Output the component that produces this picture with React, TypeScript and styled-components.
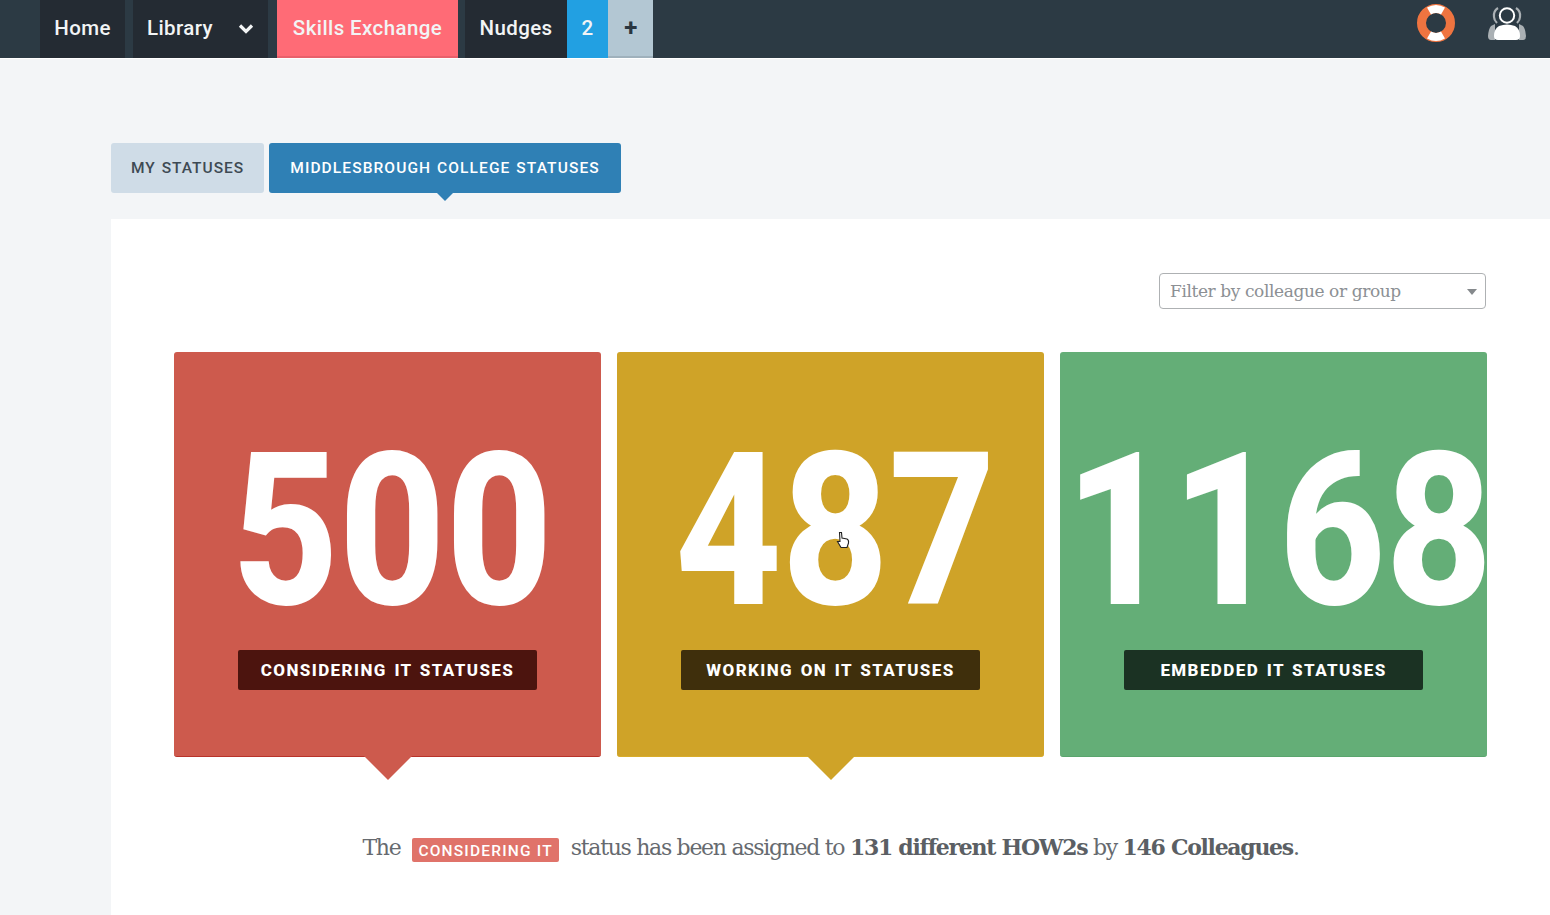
import React from 'react';
import styled, { createGlobalStyle } from 'styled-components';

const din = '"Roboto", "Liberation Sans", sans-serif';
const slab = '"DejaVu Serif", "Liberation Serif", serif';

const GlobalStyle = createGlobalStyle`
  html, body {
    margin: 0;
    height: 100%;
    overflow: hidden;
    background: #f3f5f7;
  }
  * { box-sizing: border-box; }
`;

const Page = styled.div`
  width: 1550px;
  height: 915px;
  overflow: hidden;
`;

const TopBar = styled.header`
  height: 59px;
  background: #2c3a44;
  display: flex;
  justify-content: space-between;
  padding: 0 23px 0 40px;
  border-bottom: 1px solid #fff;
`;

const Nav = styled.nav`
  display: flex;
`;

const NavItem = styled.a<{ $w: number; $gap?: number; $bg?: string; $color?: string; $shade?: string; $heavy?: boolean }>`
  width: ${p => p.$w}px;
  margin-right: ${p => p.$gap ?? 0}px;
  background: ${p => p.$bg ?? '#242b33'};
  color: ${p => p.$color ?? '#f2f4f5'};
  border-bottom: 2px solid ${p => p.$shade ?? 'transparent'};
  display: flex;
  align-items: center;
  justify-content: center;
  gap: 25px;
  font: ${p => (p.$heavy ? '700 24px' : '500 20.5px')} ${din};
  letter-spacing: 0.4px;
  padding-left: ${p => (p.$heavy ? 1 : 0)}px;
`;

const Icons = styled.div`
  display: flex;
  align-items: flex-start;
  gap: 31px;
  padding-top: 3px;
`;

const Content = styled.main`
  padding: 84px 0 0 111px;
`;

const Tabs = styled.div`
  display: flex;
  gap: 5px;
`;

const Tab = styled.button<{ $active?: boolean }>`
  position: relative;
  height: 50px;
  border: 0;
  border-radius: 3px;
  padding: 0 ${p => (p.$active ? 21 : 20)}px;
  background: ${p => (p.$active ? '#2f80b5' : '#cfdce7')};
  color: ${p => (p.$active ? '#fff' : '#3e4a54')};
  font: 500 15.5px ${din};
  letter-spacing: ${p => (p.$active ? 1.1 : 1)}px;
  word-spacing: 1px;
  white-space: nowrap;
  ${p =>
    p.$active &&
    `&::after {
      content: '';
      position: absolute;
      left: 50%;
      top: 100%;
      margin-left: -8px;
      border: 8px solid transparent;
      border-top-color: #2f80b5;
      border-bottom: 0;
    }`}
`;

const Panel = styled.section`
  margin-top: 26px;
  background: #fff;
  height: 700px;
  padding: 54px 63px 0 63px;
`;

const FilterRow = styled.div`
  display: flex;
  justify-content: flex-end;
  padding-right: 1px;
`;

const Filter = styled.div`
  position: relative;
  width: 327px;
  height: 36px;
  border: 1.5px solid #aeb1b3;
  border-radius: 4px;
  padding: 0 10px;
  display: flex;
  align-items: center;
  font: 400 17px ${slab};
  letter-spacing: -0.4px;
  color: #8c9094;
  &::after {
    content: '';
    position: absolute;
    right: 8px;
    top: 15px;
    border: 5px solid transparent;
    border-top: 6px solid #85898c;
    border-bottom: 0;
  }
`;

const Cards = styled.div`
  margin-top: 43px;
  display: grid;
  grid-template-columns: repeat(3, 427px);
  gap: 16px;
`;

const Card = styled.div<{ $bg: string; $edge: string; $tail?: boolean }>`
  position: relative;
  height: 405px;
  background: ${p => p.$bg};
  border-bottom: 1px solid ${p => p.$edge};
  border-radius: 3px;
  display: flex;
  flex-direction: column;
  align-items: center;
  ${p =>
    p.$tail &&
    `&::after {
      content: '';
      position: absolute;
      left: 50%;
      top: 100%;
      margin-left: -24px;
      border: 24px solid transparent;
      border-top-color: ${p.$bg};
      border-bottom: 0;
    }`}
`;

const Count = styled.div`
  margin-top: 60px;
  height: 238px;
  font: 800 213px/238px ${din};
  color: #fff;
  transform: translateX(5px) scaleX(0.87);
  white-space: nowrap;
`;

const CountTag = styled.div<{ $bg: string }>`
  width: 299px;
  height: 40px;
  background: ${p => p.$bg};
  border-radius: 2px;
  color: #fff;
  display: flex;
  align-items: center;
  justify-content: center;
  font: 800 17px ${din};
  letter-spacing: 1.4px;
  word-spacing: 2px;
`;

const Summary = styled.p`
  margin: 77px 0 0;
  text-align: center;
  font: 400 22px ${slab};
  color: #666a6f;
  letter-spacing: -1.3px;
  white-space: nowrap;
  b {
    font-weight: 700;
    color: #5b5f64;
  }
`;

const Badge = styled.span`
  display: inline-block;
  margin: 0 12px;
  padding: 0 6px;
  height: 24px;
  background: #e0736a;
  border-radius: 2px;
  color: #fff;
  font: 500 15.5px/26px ${din};
  letter-spacing: 1.2px;
  vertical-align: -1px;
`;

const Cursor = styled.svg`
  position: absolute;
  left: 836px;
  top: 531px;
`;

const LifeRing = () => (
  <svg width="40" height="40" viewBox="0 0 40 40">
    <circle cx="20" cy="20" r="14.5" fill="none" stroke="#ef7440" strokeWidth="9" />
    <path d="M11 4.5 A18 18 0 0 1 29 4.5 L25 11.5 A10 10 0 0 0 15 11.5Z" fill="#fff" />
    <path d="M11 35.5 A18 18 0 0 0 29 35.5 L25 28.5 A10 10 0 0 1 15 28.5Z" fill="#fff" />
  </svg>
);

const People = () => (
  <svg width="40" height="40" viewBox="0 0 40 40">
    <path d="M11 5 A9 9 0 0 0 7 14 Q7 17 10 20 M29 5 A9 9 0 0 1 33 14 Q33 17 30 20" fill="none" stroke="#aab0b4" strokeWidth="2.2" />
    <path d="M4 23 Q1.5 26 1 33 Q1 37 4 37 L8 37 L8 21Z M36 23 Q38.5 26 39 33 Q39 37 36 37 L32 37 L32 21Z" fill="#aab0b4" />
    <circle cx="20" cy="12.5" r="7.2" fill="none" stroke="#fff" strokeWidth="2" />
    <path d="M12 23 Q20 20 28 23 Q33 26 33 33 Q33 37 29 37 L11 37 Q7 37 7 33 Q7 26 12 23Z" fill="#fff" />
  </svg>
);

const Chevron = () => (
  <svg width="16" height="11" viewBox="0 0 16 11">
    <path d="M2 2.5 L8 8.5 L14 2.5" fill="none" stroke="#f2f4f5" strokeWidth="3.2" />
  </svg>
);

export default function App() {
  return (
    <Page>
      <GlobalStyle />
      <TopBar>
        <Nav>
          <NavItem $w={85} $gap={8}>Home</NavItem>
          <NavItem $w={135} $gap={9}>Library <Chevron /></NavItem>
          <NavItem $w={181} $gap={7} $bg="#ff6b76" $shade="#e8606b">Skills Exchange</NavItem>
          <NavItem $w={102}>Nudges</NavItem>
          <NavItem $w={41} $bg="#22a0e2">2</NavItem>
          <NavItem $w={45} $bg="#b3c7d3" $color="#2a3640" $shade="#9fb1bc" $heavy>+</NavItem>
        </Nav>
        <Icons>
          <LifeRing />
          <People />
        </Icons>
      </TopBar>
      <Content>
        <Tabs>
          <Tab>MY STATUSES</Tab>
          <Tab $active>MIDDLESBROUGH COLLEGE STATUSES</Tab>
        </Tabs>
        <Panel>
          <FilterRow>
            <Filter>Filter by colleague or group</Filter>
          </FilterRow>
          <Cards>
            <Card $bg="#cd5a4d" $edge="#b8332a" $tail>
              <Count>500</Count>
              <CountTag $bg="#4c140e">CONSIDERING IT STATUSES</CountTag>
            </Card>
            <Card $bg="#cfa328" $edge="#d8ac2a" $tail>
              <Count>487</Count>
              <CountTag $bg="#3f2f0c">WORKING ON IT STATUSES</CountTag>
            </Card>
            <Card $bg="#64ae77" $edge="#5aa56d">
              <Count>1168</Count>
              <CountTag $bg="#1b3223">EMBEDDED IT STATUSES</CountTag>
            </Card>
          </Cards>
          <Summary>
            The<Badge>CONSIDERING IT</Badge>status has been assigned to <b>131 different HOW2s</b> by <b>146 Colleagues</b>.
          </Summary>
        </Panel>
      </Content>
      <Cursor width="14" height="18" viewBox="0 0 14 18">
        <path d="M3.5 1.5 L5.5 1.5 L6 7 L11 8 Q13 9 12.5 12 L11 16.5 L5 16.5 L1.5 10.5 L4 10.5Z" fill="#fff" stroke="#222" strokeWidth="1.1" />
      </Cursor>
    </Page>
  );
}
